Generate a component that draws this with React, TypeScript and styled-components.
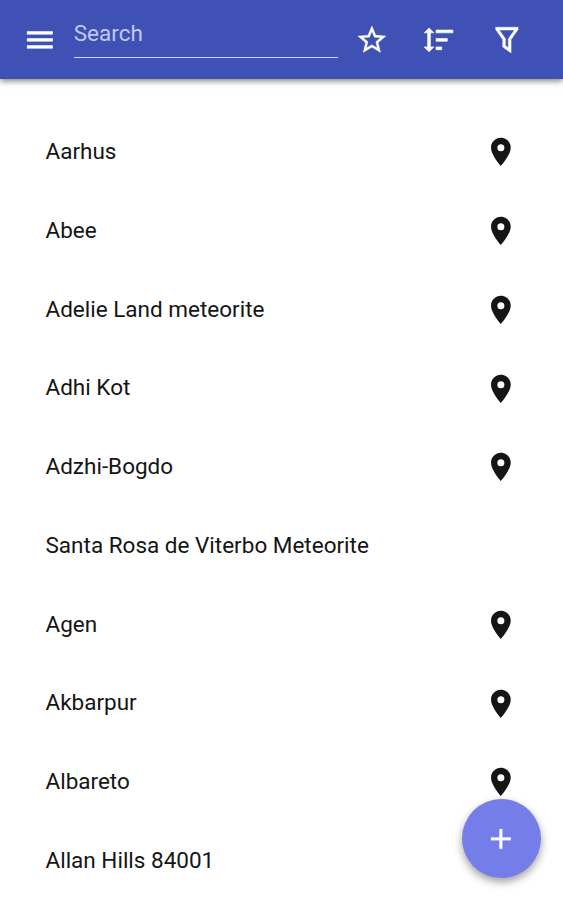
import React from "react";
import styled, { createGlobalStyle } from "styled-components";

const GlobalStyle = createGlobalStyle`
  * { box-sizing: border-box; }
  body { margin: 0; background: #fff; font-family: Roboto, sans-serif; overflow: hidden; }
`;

const Screen = styled.main`
  width: 563px;
  height: 900px;
  display: flex;
  flex-direction: column;
  overflow: hidden;
  position: relative;
`;

const Toolbar = styled.header`
  flex: none;
  height: 79px;
  display: flex;
  align-items: center;
  padding: 0 39px 0 23px;
  background: #3f51b5;
  box-shadow: 0 2px 6px rgba(0, 0, 0, 0.5);
`;

const IconButton = styled.button<{ $gap?: number }>`
  display: flex;
  flex: none;
  margin: 0 0 0 ${(p) => p.$gap ?? 0}px;
  padding: 0;
  border: 0;
  background: none;
  color: #fff;
`;

const SearchField = styled.input`
  flex: none;
  width: 264px;
  height: 48px;
  margin: -12px 0 0 17px;
  padding: 0;
  border: 0;
  border-bottom: 1.5px solid #d4d9f8;
  background: transparent;
  color: #fff;
  font: 400 22.5px Roboto, sans-serif;
  outline: none;
  &::placeholder { color: #c0c8f0; opacity: 1; }
`;

const List = styled.ul`
  flex: none;
  margin: 0;
  padding: 33.75px 45px 0 45.5px;
  list-style: none;
`;

const Row = styled.li`
  height: 78.75px;
  display: flex;
  align-items: center;
  justify-content: space-between;
  color: #151515;
  font-size: 22.5px;
  white-space: nowrap;
`;

const Name = styled.span`
  padding-bottom: 2px;
`;

const AddButton = styled.button`
  position: absolute;
  left: 462px;
  top: 799px;
  width: 79px;
  height: 79px;
  display: flex;
  align-items: center;
  justify-content: center;
  padding: 0 1px 0 0;
  border: 0;
  border-radius: 50%;
  background: #757de8;
  color: #fff;
  box-shadow: 0 4px 8px rgba(0, 0, 0, 0.38);
`;

const Icon = ({ d, weight = 0 }: { d: string; weight?: number }) => (
  <svg
    width={33.75}
    height={33.75}
    viewBox="0 0 24 24"
    fill="currentColor"
    stroke="currentColor"
    strokeWidth={weight}
    aria-hidden="true"
  >
    <path fillRule="evenodd" d={d} />
  </svg>
);

const PIN = "M12 2C8.13 2 5 5.13 5 9c0 5.25 7 13 7 13s7-7.75 7-13c0-3.87-3.13-7-7-7zm0 9.5a2.5 2.5 0 1 1 0-5 2.5 2.5 0 0 1 0 5z";
const MENU = "M3 18h18v-2H3v2zm0-5h18v-2H3v2zm0-7v2h18V6H3z";
const STAR = "M22 9.24l-7.19-.62L12 2 9.19 8.63 2 9.24l5.46 4.73L5.82 21 12 17.27 18.18 21l-1.63-7.03L22 9.24zM12 15.4l-3.76 2.27 1-4.28-3.32-2.88 4.38-.38L12 6.1l1.71 4.04 4.38.38-3.32 2.88 1 4.28L12 15.4z";
const SORT = "M6 7h2.5L5 3.5 1.5 7H4v10H1.5L5 20.5 8.5 17H6V7zm4-2v2h12V5H10zm0 8h8v-2h-8v2zm0 6h4v-2h-4v2z";
const FILTER = "M4 3h16v1.6l-5 7.2V21.3l-6-4.2v-5.3l-5-7.2V3zm2.6 2l4.4 6.2v4.9l2 1.4v-6.3L17.4 5H6.6z";
const PLUS = "M19 13h-6v6h-2v-6H5v-2h6V5h2v6h6v2z";

const meteorites = [
  { name: "Aarhus", located: true },
  { name: "Abee", located: true },
  { name: "Adelie Land meteorite", located: true },
  { name: "Adhi Kot", located: true },
  { name: "Adzhi-Bogdo", located: true },
  { name: "Santa Rosa de Viterbo Meteorite", located: false },
  { name: "Agen", located: true },
  { name: "Akbarpur", located: true },
  { name: "Albareto", located: true },
  { name: "Allan Hills 84001", located: false },
];

export default function App() {
  return (
    <Screen>
      <GlobalStyle />
      <Toolbar>
        <IconButton aria-label="Menu"><Icon d={MENU} weight={0.4} /></IconButton>
        <SearchField placeholder="Search" />
        <IconButton $gap={17} aria-label="Favorites"><Icon d={STAR} weight={0.2} /></IconButton>
        <IconButton $gap={33.5} aria-label="Sort"><Icon d={SORT} weight={0.45} /></IconButton>
        <IconButton $gap={33.75} aria-label="Filter"><Icon d={FILTER} weight={0.3} /></IconButton>
      </Toolbar>
      <List>
        {meteorites.map((m) => (
          <Row key={m.name}>
            <Name>{m.name}</Name>
            {m.located && <Icon d={PIN} />}
          </Row>
        ))}
      </List>
      <AddButton aria-label="Add"><Icon d={PLUS} weight={0.2} /></AddButton>
    </Screen>
  );
}
